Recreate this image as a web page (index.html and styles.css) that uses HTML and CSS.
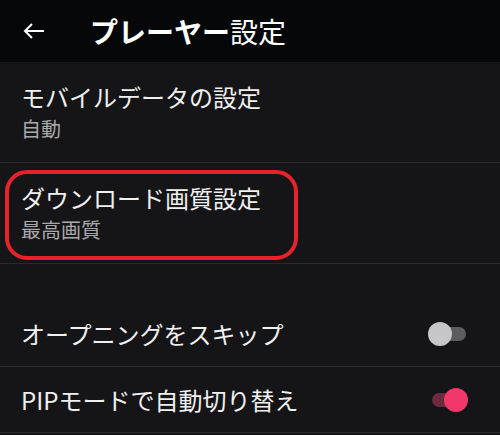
FILE: index.html
```html
<!DOCTYPE html>
<html lang="ja">
<head>
<meta charset="utf-8">
<link rel="stylesheet" href="styles.css">
</head>
<body>
<header class="appbar">
  <svg class="back" width="22" height="18" viewBox="0 0 22 18"><path d="M21 9H2M9 2L2 9l7 7" fill="none" stroke="#fff" stroke-width="2"/></svg>
  <h1 class="title"><b>プレーヤー</b>設定</h1>
</header>
<main>
  <div class="row">
    <div class="label">モバイルデータの設定</div>
    <div class="sub">自動</div>
  </div>
  <div class="row highlighted">
    <div class="label">ダウンロード画質設定</div>
    <div class="sub">最高画質</div>
    <div class="mark"></div>
  </div>
  <div class="spacer"></div>
  <div class="row toggle-row">
    <div class="label">オープニングをスキップ</div>
    <div class="switch off"><span class="track"></span><span class="thumb"></span></div>
  </div>
  <div class="row toggle-row">
    <div class="label">PIPモードで自動切り替え</div>
    <div class="switch on"><span class="track"></span><span class="thumb"></span></div>
  </div>
</main>
</body>
</html>
```
FILE: styles.css
```css
html, body {
  margin: 0;
  padding: 0;
  background: #151517;
  font-family: "Noto Sans CJK JP", "Noto Sans", sans-serif;
  color: #f0f0f0;
  overflow: hidden;
}
.appbar {
  height: 62px;
  background: #050708;
  display: flex;
  align-items: center;
  padding-left: 23px;
  box-sizing: border-box;
}
.back { flex: none; }
.title {
  margin: 0 0 0 45px;
  font-size: 28px;
  font-weight: 400;
  line-height: 34px;
  color: #fff;
}
.title b { font-weight: 700; }
.row {
  position: relative;
  padding: 18px 21px 18px 21px;
  border-bottom: 1px solid #2a2a2d;
}
.label {
  font-size: 24px;
  line-height: 34px;
}
.sub {
  font-size: 20px;
  line-height: 30px;
  color: #a9a9ab;
}
.spacer { height: 37px; }
.toggle-row {
  display: flex;
  align-items: center;
  justify-content: space-between;
  height: 66px;
  padding: 0 21px;
  box-sizing: border-box;
}
.switch {
  position: relative;
  width: 38px;
  height: 24px;
  margin-right: 13px;
}
.track {
  position: absolute;
  left: 4px;
  right: 0;
  top: 5px;
  height: 14px;
  border-radius: 7px;
}
.thumb {
  position: absolute;
  top: 0;
  width: 24px;
  height: 24px;
  border-radius: 50%;
}
.off .track { background: #5c5c5e; }
.off .thumb { left: 0; background: #c6c6c8; }
.on .track { background: #6b2a3e; }
.on .thumb { right: -2px; background: #f2386b; }
.mark {
  position: absolute;
  left: 5px;
  top: 7px;
  width: 293px;
  height: 90px;
  box-sizing: border-box;
  border: 4px solid #e6222b;
  border-radius: 22px;
}
```
